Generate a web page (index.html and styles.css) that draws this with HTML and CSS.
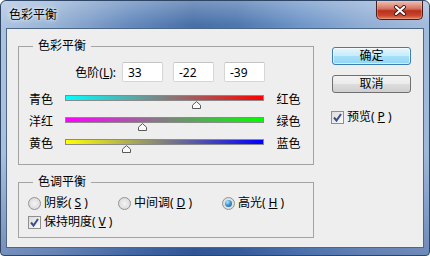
FILE: index.html
```html
<!DOCTYPE html>
<html lang="zh-CN">
<head>
    <meta charset="UTF-8">
    <meta name="viewport" content="width=device-width, initial-scale=1.0">
    <title>色彩平衡</title>
    <link rel="stylesheet" href="styles.css">
</head>
<body>
    <div class="window">
        <div class="titlebar">
            <span class="title">色彩平衡</span>
            <button class="close-btn" aria-label="关闭">
                <svg width="14" height="11" viewBox="0 0 14 11">
                    <path d="M3 2 L11 9 M11 2 L3 9" stroke="#3d1a16" stroke-width="4" stroke-linecap="round"/>
                    <path d="M3 2 L11 9 M11 2 L3 9" stroke="#ffffff" stroke-width="2.2" stroke-linecap="round"/>
                </svg>
            </button>
        </div>

        <div class="client">
            <div class="groups">
                <div class="group color-group">
                    <span class="group-title">色彩平衡</span>
                    <div class="levels-row">
                        <label class="levels-label">色阶(<u>L</u>):</label>
                        <input class="level-input" type="text" value="33">
                        <input class="level-input" type="text" value="-22">
                        <input class="level-input" type="text" value="-39">
                    </div>

                    <div class="slider-row">
                        <span class="side-label">青色</span>
                        <div class="track cyan-red">
                            <svg class="thumb" style="left: 66.5%" width="9" height="8" viewBox="0 0 9 8"><path d="M4.5 0.6 L8.5 4.2 V7.5 H0.5 V4.2 Z" fill="#fafafa" stroke="#5a5a5a" stroke-linejoin="round"/></svg>
                        </div>
                        <span class="side-label right">红色</span>
                    </div>
                    <div class="slider-row">
                        <span class="side-label">洋红</span>
                        <div class="track magenta-green">
                            <svg class="thumb" style="left: 39%" width="9" height="8" viewBox="0 0 9 8"><path d="M4.5 0.6 L8.5 4.2 V7.5 H0.5 V4.2 Z" fill="#fafafa" stroke="#5a5a5a" stroke-linejoin="round"/></svg>
                        </div>
                        <span class="side-label right">绿色</span>
                    </div>
                    <div class="slider-row">
                        <span class="side-label">黄色</span>
                        <div class="track yellow-blue">
                            <svg class="thumb" style="left: 30.5%" width="9" height="8" viewBox="0 0 9 8"><path d="M4.5 0.6 L8.5 4.2 V7.5 H0.5 V4.2 Z" fill="#fafafa" stroke="#5a5a5a" stroke-linejoin="round"/></svg>
                        </div>
                        <span class="side-label right">蓝色</span>
                    </div>
                </div>

                <div class="group tone-group">
                    <span class="group-title">色调平衡</span>
                    <div class="tone-row">
                        <label class="option tone-shadow"><span class="radio"></span>阴影(<u>S</u>)</label>
                        <label class="option tone-mid"><span class="radio"></span>中间调(<u>D</u>)</label>
                        <label class="option"><span class="radio checked"></span>高光(<u>H</u>)</label>
                    </div>
                    <div class="tone-row">
                        <label class="option"><span class="checkbox"><svg width="11" height="11" viewBox="0 0 11 11"><path d="M2 5.5 L4.5 8.5 L9 2" fill="none" stroke="#3b4f8c" stroke-width="2"/></svg></span>保持明度(<u>V</u>)</label>
                    </div>
                </div>
            </div>

            <div class="actions">
                <button class="btn default">确定</button>
                <button class="btn">取消</button>
                <label class="option preview"><span class="checkbox"><svg width="11" height="11" viewBox="0 0 11 11"><path d="M2 5.5 L4.5 8.5 L9 2" fill="none" stroke="#3b4f8c" stroke-width="2"/></svg></span>预览(<u>P</u>)</label>
            </div>
        </div>
    </div>
</body>
</html>
```

FILE: styles.css
```css
* {
    margin: 0;
    padding: 0;
    box-sizing: border-box;
}

body {
    background-color: #ffffff;
    font-family: "Noto Sans", "Noto Sans CJK SC", sans-serif;
    font-size: 12px;
    color: #000000;
    width: 430px;
    height: 256px;
    overflow: hidden;
}

.window {
    width: 430px;
    height: 256px;
    border: 1px solid #2f4565;
    border-radius: 6px 6px 4px 4px;
    padding: 0 5px 7px 5px;
    display: flex;
    flex-direction: column;
    background:
        linear-gradient(to bottom, rgba(255, 255, 255, 0.3) 0, rgba(255, 255, 255, 0.05) 24px, rgba(255, 255, 255, 0) 60%, rgba(20, 50, 120, 0.35) 100%),
        linear-gradient(to right, #a9c1df 0%, #93afd4 12%, #5d84ba 30%, #3e68a3 45%, #4570aa 55%, #6790c6 70%, #8aa9d2 85%, #9fb8da 100%);
}

/* Title bar */
.titlebar {
    height: 27px;
    display: flex;
    align-items: flex-start;
}

.title {
    padding: 6px 0 0 3px;
    line-height: 16px;
    font-size: 12px;
    text-shadow: 0 0 6px rgba(255, 255, 255, 0.9), 0 0 3px rgba(255, 255, 255, 0.8);
}

.close-btn {
    margin-left: auto;
    margin-right: 1px;
    width: 47px;
    height: 19px;
    border: 1px solid #4a1e18;
    border-top: none;
    border-radius: 0 0 5px 5px;
    display: flex;
    align-items: center;
    justify-content: center;
    background:
        linear-gradient(to bottom, rgba(255, 255, 255, 0.35) 0, rgba(255, 255, 255, 0.1) 45%, rgba(255, 255, 255, 0) 50%),
        linear-gradient(to bottom, #e29a88 0%, #cf5c45 45%, #b8301c 55%, #c9452b 80%, #e0805e 100%);
    box-shadow: inset 0 0 0 1px rgba(255, 200, 180, 0.35);
}

/* Client area */
.client {
    flex: 1;
    display: flex;
    padding: 17px 0 0 11px;
    background-color: #eeeeee;
    border: 1px solid #4f6787;
}

.groups {
    width: 296px;
    display: flex;
    flex-direction: column;
    gap: 17px;
}

.group {
    position: relative;
    border: 1px solid #a3a3a3;
}

.group-title {
    position: absolute;
    top: -9px;
    left: 14px;
    padding: 0 5px;
    line-height: 16px;
    background-color: #eeeeee;
}

.color-group {
    padding: 15px 0 9px 0;
}

.levels-row {
    display: flex;
    align-items: center;
    margin-bottom: 7px;
}

.levels-label {
    width: 97px;
    text-align: right;
    margin-right: 6px;
}

.level-input {
    width: 41px;
    height: 20px;
    margin-right: 10px;
    border: 1px solid #d6d6d6;
    border-top-color: #c4c4c4;
    border-radius: 2px;
    background-color: #ffffff;
    padding: 0 5px;
    font-family: inherit;
    font-size: 12px;
    color: #000000;
}

.slider-row {
    height: 22px;
    display: flex;
    align-items: flex-start;
    padding-left: 10px;
}

.side-label {
    width: 37px;
    margin-top: 3px;
    line-height: 16px;
}

.side-label.right {
    margin-left: 13px;
}

.track {
    position: relative;
    width: 201px;
    height: 6px;
    margin-top: 6px;
    border: 1px solid #8a8a8a;
}

.cyan-red { background: linear-gradient(to right, #00ffff, #ff0000); }
.magenta-green { background: linear-gradient(to right, #ff00ff, #00ff00); }
.yellow-blue { background: linear-gradient(to right, #ffff00, #0000ff); }

.thumb {
    position: absolute;
    top: 5px;
    margin-left: -4.5px;
    display: block;
}

.tone-group {
    padding: 11px 0 6px 9px;
    display: flex;
    flex-direction: column;
    gap: 1px;
}

.tone-row {
    height: 18px;
    display: flex;
    align-items: center;
}

.option {
    display: flex;
    align-items: center;
    gap: 3px;
    line-height: 16px;
}

.tone-shadow { width: 90px; }
.tone-mid { width: 104px; }

.radio {
    width: 13px;
    height: 13px;
    border-radius: 50%;
    border: 1px solid #939393;
    background: radial-gradient(circle at 50% 50%, #f4f4f4 0, #e2e2e2 55%, #cfcfcf 100%);
    position: relative;
}

.radio.checked::after {
    content: '';
    position: absolute;
    top: 2px;
    left: 2px;
    width: 7px;
    height: 7px;
    border-radius: 50%;
    background: radial-gradient(circle at 35% 30%, #b8e6fb 0, #3a9ad9 45%, #11508f 100%);
}

.checkbox {
    width: 13px;
    height: 13px;
    border: 1px solid #8f8f8f;
    background: linear-gradient(to bottom right, #dcdcdc, #fbfbfb);
    display: flex;
    align-items: center;
    justify-content: center;
}

/* Buttons */
.actions {
    margin-left: 18px;
    padding-top: 1px;
    display: flex;
    flex-direction: column;
    align-items: flex-start;
}

.btn {
    width: 79px;
    height: 18px;
    margin-bottom: 10px;
    border: 1px solid #707070;
    border-radius: 3px;
    font-family: inherit;
    font-size: 12px;
    line-height: 16px;
    color: #000000;
    background: linear-gradient(to bottom, #f2f2f2 0%, #ebebeb 50%, #dddddd 51%, #cfcfcf 100%);
}

.btn.default {
    border-color: #3c7fb1;
    background: linear-gradient(to bottom, #e6f6fd 0%, #c6ecfc 50%, #a6e0fa 51%, #8fd6f7 100%);
    box-shadow: inset 0 0 0 1px rgba(255, 255, 255, 0.6);
}

.preview {
    margin-top: 6px;
    margin-left: -1px;
}
```
